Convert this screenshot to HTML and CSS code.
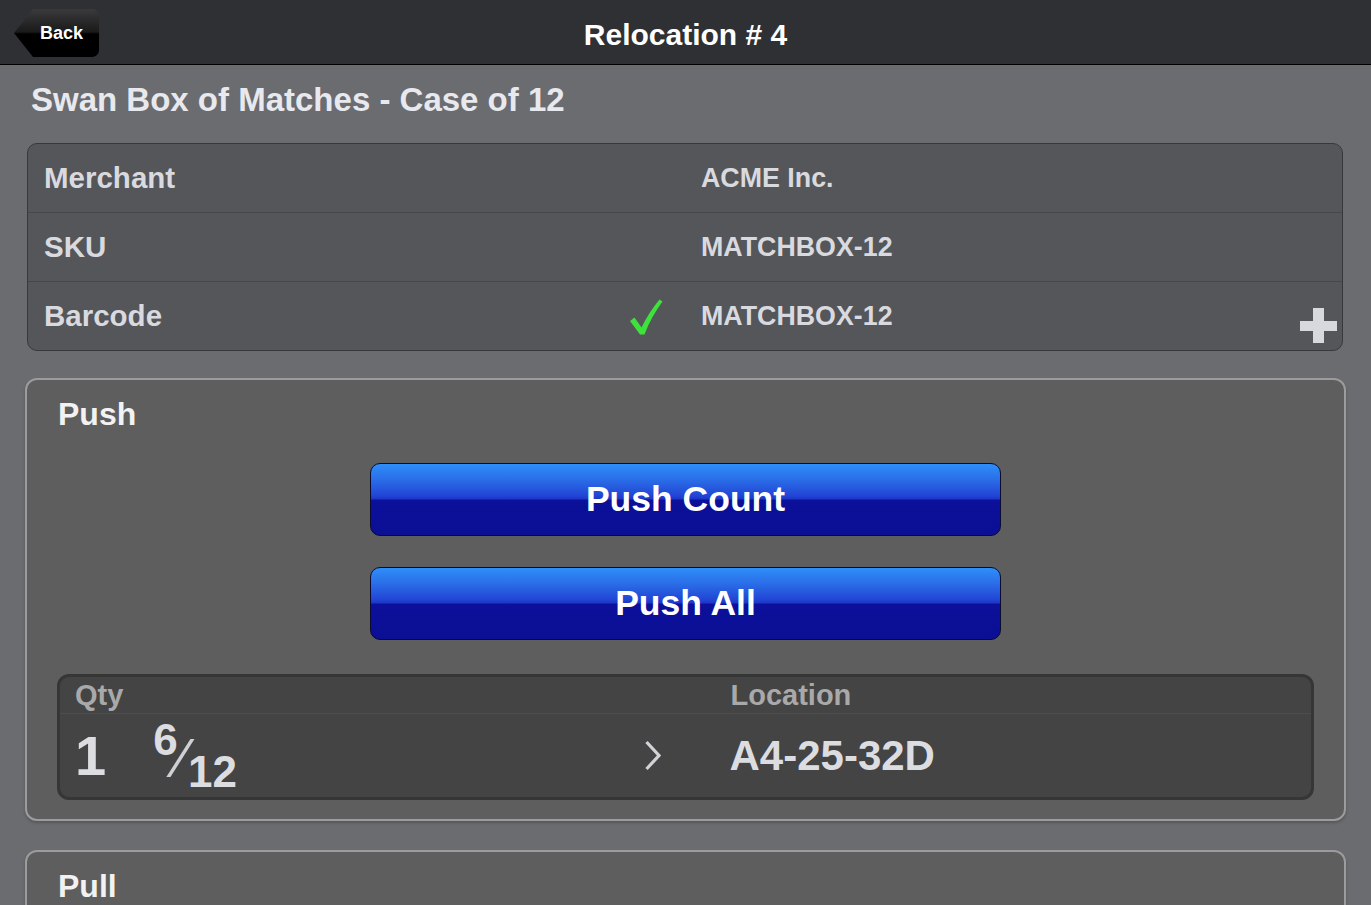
FILE: index.html
```html
<!DOCTYPE html>
<html lang="en">
<head>
<meta charset="utf-8">
<title>Relocation # 4</title>
<link rel="stylesheet" href="styles.css">
</head>
<body>
<header class="topbar">
  <a class="back-btn">Back</a>
  <h1 class="page-title">Relocation # 4</h1>
</header>
<main class="content">
  <h2 class="item-title">Swan Box of Matches - Case of 12</h2>
  <div class="info-table">
    <div class="info-row">
      <div class="info-label">Merchant</div>
      <div class="info-value">ACME Inc.</div>
    </div>
    <div class="info-row">
      <div class="info-label">SKU</div>
      <div class="info-value">MATCHBOX-12</div>
    </div>
    <div class="info-row">
      <div class="info-label">Barcode
        <svg class="check" width="34" height="38" viewBox="0 0 34 38"><path d="M1 22 L5.5 18.5 L12.5 28.5 C17.5 18 23.5 9 30.5 0.5 L33.5 2.5 C26.5 12 20 23.5 15.5 35.5 L11 35.5 Z" fill="#3de23a"/></svg>
      </div>
      <div class="info-value">MATCHBOX-12
        <svg class="plus" width="37" height="35" viewBox="0 0 37 35"><rect x="0" y="13" width="37" height="10" fill="#d8d9dd"/><rect x="13" y="0" width="11" height="35" fill="#d8d9dd"/></svg>
      </div>
    </div>
  </div>

  <section class="panel">
    <h3 class="panel-title">Push</h3>
    <div class="btn-stack">
      <button class="blue-btn">Push Count</button>
      <button class="blue-btn">Push All</button>
    </div>
    <div class="qty-box">
      <div class="qty-head">
        <span class="qty-h-left">Qty</span>
        <span class="qty-h-right">Location</span>
      </div>
      <div class="qty-body">
        <div class="qty-cell">
          <span class="qty-whole">1</span>
          <span class="frac"><span class="frac-num">6</span><span class="frac-slash">&#8260;</span><span class="frac-den">12</span></span>
          <svg class="chev" width="18" height="31" viewBox="0 0 18 31"><polyline points="2.5,2 15,15.5 2.5,29" fill="none" stroke="#d2d3d7" stroke-width="3.2"/></svg>
        </div>
        <div class="loc-cell">A4-25-32D</div>
      </div>
    </div>
  </section>

  <section class="panel panel-pull">
    <h3 class="panel-title">Pull</h3>
  </section>
</main>
</body>
</html>
```
FILE: styles.css
```css
html, body {
  margin: 0;
  padding: 0;
}
body {
  background: #6b6c70;
  font-family: "Liberation Sans", Arial, Helvetica, sans-serif;
  font-weight: bold;
  overflow: hidden;
}

/* Header bar */
.topbar {
  display: grid;
  grid-template-columns: 1fr auto 1fr;
  align-items: center;
  height: 64px;
  background: #2f3033;
  border-bottom: 1px solid #000;
}
.back-btn {
  justify-self: start;
  margin: 2px 0 0 14px;
  height: 48px;
  box-sizing: border-box;
  padding: 0 16px 0 26px;
  display: flex;
  align-items: center;
  font-size: 18px;
  color: #fff;
  background: linear-gradient(#3a3a3c 0%, #1a1a1a 48%, #000 52%, #000 100%);
  clip-path: polygon(19px 0, 100% 0, 100% 100%, 19px 100%, 0 50%);
  border-radius: 0 7px 7px 0;
}
.page-title {
  margin: 5px 0 0;
  font-size: 30px;
  line-height: 36px;
  color: #fff;
}

/* Content */
.content {
  padding: 15px 25px 0;
}
.item-title {
  margin: 0 0 23px 6px;
  font-size: 33px;
  line-height: 40px;
  color: #e8e9ee;
}

/* Info table */
.info-table {
  margin: 0 3px 27px 2px;
  background: #55565a;
  border: 1px solid #38393b;
  border-radius: 10px;
  overflow: hidden;
}
.info-row {
  display: grid;
  grid-template-columns: 1fr 1fr;
  height: 68px;
}
.info-row + .info-row {
  border-top: 1px solid #46474a;
}
.info-label {
  display: flex;
  align-items: center;
  justify-content: space-between;
  padding: 0 22px 0 16px;
  font-size: 29.5px;
  color: #d9dadf;
}
.info-value {
  display: flex;
  align-items: center;
  padding-left: 16px;
  font-size: 26.8px;
  color: #d9dadf;
}
.check {
  display: block;
  margin-top: 3px;
}
.plus {
  display: block;
  margin-left: auto;
  margin-right: 5px;
  align-self: flex-end;
  margin-bottom: 7px;
}

/* Panels */
.panel {
  margin: 0 0 29px;
  background: #5e5e5e;
  border: 2px solid #9c9c9c;
  border-radius: 12px;
  padding: 16px 30px 19px;
  box-shadow: 0 2px 3px rgba(0, 0, 0, 0.2);
}
.panel-title {
  margin: 0 0 0 1px;
  font-size: 32px;
  line-height: 36px;
  color: #f2f2f2;
}
.panel-pull {
  min-height: 120px;
}

.btn-stack {
  display: flex;
  flex-direction: column;
  align-items: center;
  gap: 31px;
  margin: 31px 0 34px;
}
.blue-btn {
  width: 631px;
  height: 73px;
  border: 1px solid #0b0b2e;
  border-radius: 10px;
  font-family: inherit;
  font-weight: bold;
  font-size: 35.5px;
  color: #fff;
  padding: 0;
  background: linear-gradient(#2f8ef9 0%, #2a6ee8 22%, #2246d6 44%, #1d38c8 49%, #0c109a 51%, #0b0f94 100%);
}

/* Qty box */
.qty-box {
  background: #444;
  border: 3px solid #363636;
  border-radius: 12px;
  overflow: hidden;
}
.qty-head {
  display: grid;
  grid-template-columns: 1fr 1fr;
  align-items: center;
  height: 36px;
  border-bottom: 1px solid #4d4d4d;
  font-size: 29px;
  color: #a9a9a9;
}
.qty-h-left {
  padding-left: 15px;
}
.qty-h-right {
  padding-left: 45px;
}
.qty-body {
  display: grid;
  grid-template-columns: 1fr 1fr;
  align-items: center;
  height: 83px;
  color: #dcdde1;
}
.qty-cell {
  display: flex;
  align-items: center;
  padding: 0 24px 0 15px;
}
.qty-whole {
  font-size: 56px;
  line-height: 1;
}
.frac {
  display: inline-flex;
  height: 76px;
  margin-left: 47px;
}
.frac-num {
  align-self: flex-start;
  font-size: 44px;
  line-height: 44px;
}
.frac-slash {
  align-self: center;
  font-weight: normal;
  font-size: 56px;
  line-height: 56px;
  color: #cfd0d4;
  margin: 4px 0 0;
}
.frac-den {
  align-self: flex-end;
  font-size: 44px;
  line-height: 44px;
  margin-left: 1px;
}
.chev {
  display: block;
  margin-left: auto;
}
.loc-cell {
  padding-left: 44px;
  font-size: 42px;
}
```
